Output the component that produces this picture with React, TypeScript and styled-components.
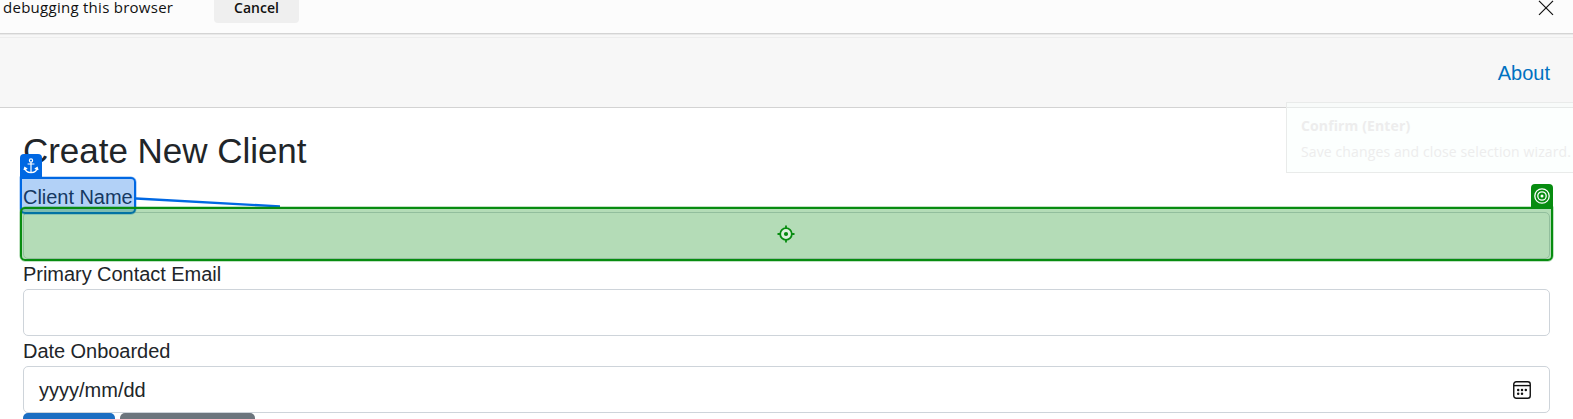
import React from "react";
import styled, { createGlobalStyle } from "styled-components";

const Global = createGlobalStyle`
  *, *::before, *::after { box-sizing: border-box; }
  body {
    margin: 0;
    background: #fff;
    color: #212529;
    font: 20px/30px "Liberation Sans", Arial, sans-serif;
    overflow: hidden;
  }
`;

const Screen = styled.div`
  position: relative;
  width: 100%;
  height: 419px;
  overflow: hidden;
`;

const InfoBar = styled.div`
  display: flex;
  align-items: flex-start;
  height: 35px;
  padding: 0 19px 0 3px;
  background: #fcfcfc;
  border-bottom: 1px solid #e9e9e9;
  box-shadow: inset 0 -1px #d4d4d4;
  color: #111;
  font: 15px/15px "Open Sans", "Noto Sans", sans-serif;
`;

const InfoText = styled.span`
  width: 211px;
  white-space: nowrap;
  letter-spacing: 0.27px;
`;

const CancelButton = styled.button`
  width: 85px;
  height: 23px;
  padding: 0 0 7px;
  border: 0;
  border-radius: 0 0 4px 4px;
  background: #efefef;
  color: #111;
  font: 600 14px/16px "Open Sans", "Noto Sans", sans-serif;
`;

const CloseIcon = styled.svg`
  margin-left: auto;
`;

const Nav = styled.nav`
  display: flex;
  justify-content: flex-end;
  align-items: center;
  height: 73px;
  padding: 3px 23px 0 0;
  background: linear-gradient(#f7f7f7 2px, #ededed 2px, #ededed 3px, #f7f7f7 3px);
  border-bottom: 1px solid #d3d3d3;
`;

const NavLink = styled.a`
  color: #0071c1;
  text-decoration: none;
`;

const Main = styled.main`
  padding: 22px 23px 0;
`;

const Title = styled.h1`
  margin: 0 0 10px;
  font-size: 35px;
  line-height: 42px;
  font-weight: 400;
  letter-spacing: -0.03px;
`;

const Label = styled.label`
  display: block;
  height: 30px;
  letter-spacing: -0.04px;
`;

const Field = styled.div`
  display: flex;
  align-items: center;
  justify-content: space-between;
  height: 47px;
  padding: 0 18px 0 15px;
  border: 1px solid #ced4da;
  border-radius: 5px;
  background: #fff;
`;

const Actions = styled.div`
  display: flex;
  gap: 5px;
`;

const ActionButton = styled.button<{ $width: number; $color: string }>`
  width: ${(p) => p.$width}px;
  height: 47px;
  border: 0;
  border-radius: 5px;
  background: ${(p) => p.$color};
`;

const Selection = styled.div<{ $color: string; $fill: string; $halo: string }>`
  position: absolute;
  display: flex;
  align-items: center;
  justify-content: center;
  border: 2px solid ${(p) => p.$color};
  border-radius: 5px;
  background: ${(p) => p.$fill};
  box-shadow: 0 0 0 0.5px ${(p) => p.$halo};
`;

const AnchorSelection = styled(Selection)`
  left: 20px;
  top: 177px;
  width: 116px;
  height: 37px;
  border-top-left-radius: 0;
`;

const TargetSelection = styled(Selection)`
  left: 20px;
  top: 207px;
  right: 20px;
  height: 54px;
  padding-right: 1px;
  border-top-right-radius: 0;
`;

const Badge = styled.div<{ $color: string }>`
  position: absolute;
  display: flex;
  align-items: center;
  justify-content: center;
  width: 22px;
  height: 23px;
  border-radius: 4px 4px 0 0;
  background: ${(p) => p.$color};
`;

const AnchorBadge = styled(Badge)`
  left: 20px;
  top: 154px;
`;

const TargetBadge = styled(Badge)`
  right: 20px;
  top: 184px;
`;

const Connector = styled.svg`
  position: absolute;
  left: 136px;
  top: 194px;
`;

const Tooltip = styled.div`
  position: absolute;
  left: 1286px;
  top: 102px;
  width: 300px;
  height: 71px;
  padding: 13px 0 0 14px;
  border: 1px solid #e9ebea;
  background: rgba(250, 255, 253, 0.5);
  color: #ededed;
  font: 14px/20px "Open Sans", "Noto Sans", sans-serif;
  white-space: nowrap;
`;

const TooltipTitle = styled.div`
  margin-bottom: 6px;
  font-weight: 700;
  letter-spacing: 0.12px;
`;

const TooltipText = styled.div`
  letter-spacing: 0.12px;
`;

const BLUE = "#0068e3";
const GREEN = "#078c10";

export default function App() {
  return (
    <Screen>
      <Global />
      <InfoBar>
        <InfoText>debugging this browser</InfoText>
        <CancelButton>Cancel</CancelButton>
        <CloseIcon width="16" height="16" viewBox="0 0 16 16">
          <path d="M1 .8 15 14.8M15 .8 1 14.8" stroke="#111" strokeWidth="1.2" fill="none" />
        </CloseIcon>
      </InfoBar>
      <Nav>
        <NavLink>About</NavLink>
      </Nav>
      <Main>
        <Title>Create New Client</Title>
        <Label>Client Name</Label>
        <Field />
        <Label>Primary Contact Email</Label>
        <Field />
        <Label>Date Onboarded</Label>
        <Field>
          <span>yyyy/mm/dd</span>
          <svg width="18" height="18" viewBox="0 0 18 18">
            <rect x=".75" y=".75" width="16.5" height="16.5" rx="2.5" fill="none" stroke="#111" strokeWidth="1.4" />
            <path d="M1 4.6h16" stroke="#111" strokeWidth="1.4" />
            <g fill="#111">
              <circle cx="5.2" cy="9" r="1.25" />
              <circle cx="9" cy="9" r="1.25" />
              <circle cx="12.8" cy="9" r="1.25" />
              <circle cx="5.2" cy="12.8" r="1.25" />
              <circle cx="9" cy="12.8" r="1.25" />
            </g>
          </svg>
        </Field>
        <Actions>
          <ActionButton $width={92} $color="#1b6ec2" />
          <ActionButton $width={135} $color="#6c757d" />
        </Actions>
      </Main>

      <AnchorSelection $color={BLUE} $fill="rgba(0, 104, 227, 0.3)" $halo="rgba(0, 104, 227, 0.5)" />
      <AnchorBadge $color={BLUE}>
        <svg width="16" height="16" viewBox="0 0 16 16" fill="none" stroke="#fff" strokeWidth="1.2">
          <circle cx="8" cy="2.4" r="1.6" />
          <path d="M8 4v10.8M4.6 6h6.8M1.8 9.4C2 12.8 4.6 14.6 8 14.6s6-1.8 6.2-5.2M1 12 1.8 9.4 4.2 11M15 12l-.8-2.6L11.8 11" />
        </svg>
      </AnchorBadge>
      <Connector width="146" height="16" viewBox="0 0 146 16">
        <path d="M0 4.5 144 12.4" stroke={BLUE} strokeWidth="2.4" />
      </Connector>
      <TargetSelection $color={GREEN} $fill="rgba(7, 140, 16, 0.3)" $halo="rgba(7, 140, 16, 0.5)">
        <svg width="18" height="18" viewBox="0 0 18 18">
          <circle cx="9" cy="9" r="5.8" fill="#dcf0dc" stroke={GREEN} strokeWidth="1.8" />
          <circle cx="9" cy="9" r="2.1" fill={GREEN} />
          <path d="M9 .5v3M9 14.5v3M.5 9h3M14.5 9h3" stroke={GREEN} strokeWidth="1.8" />
        </svg>
      </TargetSelection>
      <TargetBadge $color={GREEN}>
        <svg width="16" height="16" viewBox="0 0 16 16" fill="none" stroke="#fff" strokeWidth="1.3">
          <circle cx="8" cy="8" r="7.2" />
          <circle cx="8" cy="8" r="4.2" />
          <circle cx="8" cy="8" r="1.5" fill="#fff" stroke="none" />
        </svg>
      </TargetBadge>
      <Tooltip>
        <TooltipTitle>Confirm (Enter)</TooltipTitle>
        <TooltipText>Save changes and close selection wizard.</TooltipText>
      </Tooltip>
    </Screen>
  );
}
